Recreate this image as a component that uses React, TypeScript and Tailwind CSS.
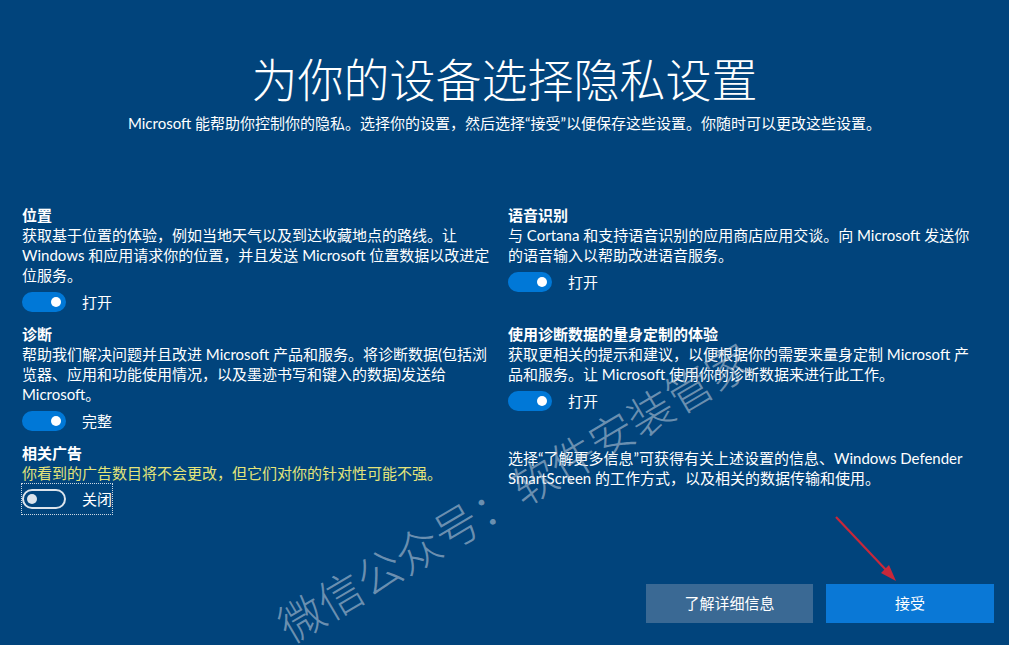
import React from 'react';

type Setting = {
  title: string;
  desc: string;
  state: string;
  on: boolean;
  warn?: boolean;
};

const Toggle: React.FC<{ on: boolean }> = ({ on }) =>
  on ? (
    <span className="flex h-5 w-11 shrink-0 items-center rounded-full bg-[#0078d7]">
      <span className="ml-auto mr-[5px] h-[10px] w-[10px] rounded-full bg-white"></span>
    </span>
  ) : (
    <span className="flex h-5 w-11 shrink-0 items-center rounded-full border-2 border-[#dce4ec]">
      <span className="ml-[3px] h-[10px] w-[10px] rounded-full bg-[#dce4ec]"></span>
    </span>
  );

const SettingBlock: React.FC<{ item: Setting }> = ({ item }) => (
  <div>
    <h3 className="text-[15px] font-bold leading-5">{item.title}</h3>
    <p className={`text-[15px] leading-5 ${item.warn ? 'text-[#e4e47a]' : 'text-white'}`}>{item.desc}</p>
    {item.on ? (
      <div className="mt-[7px] flex items-center gap-4">
        <Toggle on />
        <span className="text-[15px] leading-5">{item.state}</span>
      </div>
    ) : (
      <div className="-ml-px inline-flex items-center gap-4 border border-dotted border-white/80 py-[5px]">
        <Toggle on={false} />
        <span className="text-[15px] leading-5">{item.state}</span>
      </div>
    )}
  </div>
);

export default function App() {
  const left: Setting[] = [
    {
      title: '位置',
      desc: '获取基于位置的体验，例如当地天气以及到达收藏地点的路线。让 Windows 和应用请求你的位置，并且发送 Microsoft 位置数据以改进定位服务。',
      state: '打开',
      on: true,
    },
    {
      title: '诊断',
      desc: '帮助我们解决问题并且改进 Microsoft 产品和服务。将诊断数据(包括浏览器、应用和功能使用情况，以及墨迹书写和键入的数据)发送给 Microsoft。',
      state: '完整',
      on: true,
    },
    {
      title: '相关广告',
      desc: '你看到的广告数目将不会更改，但它们对你的针对性可能不强。',
      state: '关闭',
      on: false,
      warn: true,
    },
  ];

  const right: Setting[] = [
    {
      title: '语音识别',
      desc: '与 Cortana 和支持语音识别的应用商店应用交谈。向 Microsoft 发送你的语音输入以帮助改进语音服务。',
      state: '打开',
      on: true,
    },
    {
      title: '使用诊断数据的量身定制的体验',
      desc: '获取更相关的提示和建议，以便根据你的需要来量身定制 Microsoft 产品和服务。让 Microsoft 使用你的诊断数据来进行此工作。',
      state: '打开',
      on: true,
    },
  ];

  return (
    <div className="relative flex h-[645px] w-full flex-col overflow-hidden bg-[#01447c] font-['Lato','Noto_Sans_CJK_SC',sans-serif] text-white">
      {/* Header */}
      <h1 className="mt-[52px] text-center text-[46px] font-light leading-[55px]">为你的设备选择隐私设置</h1>
      <p className="mt-[6px] text-center text-[15px] leading-5">
        Microsoft 能帮助你控制你的隐私。选择你的设置，然后选择“接受”以便保存这些设置。你随时可以更改这些设置。
      </p>

      {/* Settings grid */}
      <div className="mt-[72px] grid grid-cols-[470px_470px] gap-x-4 gap-y-3 pl-[22px]">
        <SettingBlock item={left[0]} />
        <SettingBlock item={right[0]} />
        <SettingBlock item={left[1]} />
        <SettingBlock item={right[1]} />
        <SettingBlock item={left[2]} />
        <p className="pt-[5px] text-[15px] leading-5">
          选择“了解更多信息”可获得有关上述设置的信息、Windows Defender SmartScreen 的工作方式，以及相关的数据传输和使用。
        </p>
      </div>

      {/* Buttons */}
      <div className="mt-auto flex justify-end gap-[13px] pb-[22px] pr-[15px]">
        <button className="h-[39px] w-[167px] bg-[#3a6994] text-[15px] text-white">了解详细信息</button>
        <button className="h-[39px] w-[168px] bg-[#0a78d6] text-[15px] text-white">接受</button>
      </div>

      {/* Watermark */}
      <div className="pointer-events-none absolute left-[515px] top-[493px] -translate-x-1/2 -translate-y-1/2 -rotate-[30.5deg] whitespace-nowrap text-[45px] font-light leading-none text-[rgba(200,210,222,0.55)]">
        微信公众号：软件安装管家
      </div>

      {/* Red arrow */}
      <svg className="pointer-events-none absolute left-[830px] top-[510px]" width="75" height="80" viewBox="0 0 75 80">
        <line x1="6" y1="7" x2="57" y2="61" stroke="#c8283a" strokeWidth="2.2" />
        <polygon points="66,71 51,63 59,55" fill="#c8283a" />
      </svg>
    </div>
  );
}
